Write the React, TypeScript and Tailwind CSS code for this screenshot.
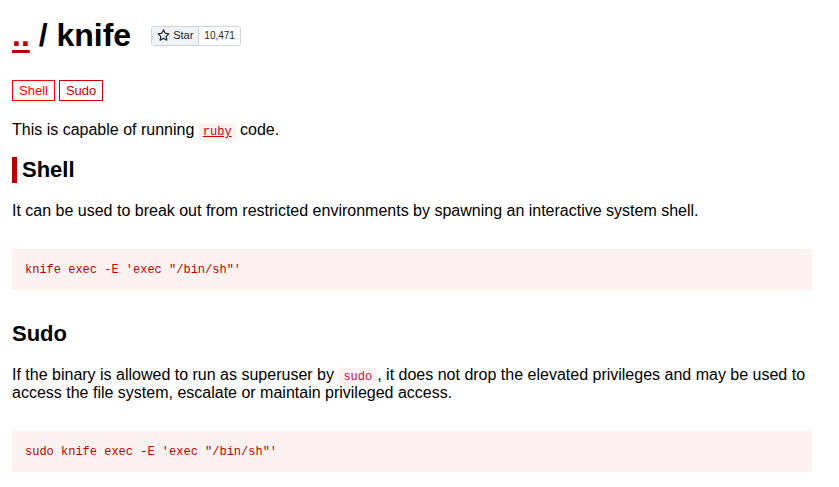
import React from "react";

const StarIcon = () => (
  <svg viewBox="0 0 16 16" width="13" height="13" fill="#24292f" aria-hidden="true">
    <path d="M8 .25a.75.75 0 0 1 .673.418l1.882 3.815 4.21.612a.75.75 0 0 1 .416 1.279l-3.046 2.97.719 4.192a.751.751 0 0 1-1.088.791L8 12.347l-3.766 1.98a.75.75 0 0 1-1.088-.79l.72-4.194L.818 6.374a.75.75 0 0 1 .416-1.28l4.21-.611L7.327.668A.75.75 0 0 1 8 .25Zm0 2.445L6.615 5.5a.75.75 0 0 1-.564.41l-3.097.45 2.24 2.184a.75.75 0 0 1 .216.664l-.528 3.084 2.769-1.456a.75.75 0 0 1 .698 0l2.77 1.456-.53-3.084a.75.75 0 0 1 .216-.664l2.24-2.183-3.096-.45a.75.75 0 0 1-.564-.41L8 2.694Z" />
  </svg>
);

const CodeBlock = ({ children }: { children: string }) => (
  <pre className="bg-[#fdf2f2] pl-[13px] pr-3 pt-[13px] pb-[11px] font-['Liberation_Mono',monospace] text-[12px] leading-[17px] text-[#c00000]">
    {children}
  </pre>
);

const App = () => {
  return (
    <div className="min-h-screen bg-white font-['Liberation_Sans',Arial,sans-serif] text-black">
      <div className="w-[800px] ml-3 pt-[17px] pb-4">
        {/* Title */}
        <div className="flex items-center gap-5">
          <h1 className="text-[32px] leading-[37px] font-bold">
            <a href="#" className="text-[#bb0000] underline decoration-[3px] underline-offset-4">..</a> / knife
          </h1>
          <div className="flex h-5 items-stretch rounded-[3px] border border-[#d1d5da] text-[11px] text-[#24292f]">
            <div className="flex items-center gap-[3px] bg-[#eff3f6] px-[5px] font-medium border-r border-[#d1d5da]">
              <StarIcon />
              <span>Star</span>
            </div>
            <div className="flex items-center bg-white px-[5px] text-[10px]">10,471</div>
          </div>
        </div>

        {/* Tags */}
        <div className="mt-[26px] flex gap-1 text-[13px] leading-[15px]">
          <a href="#" className="border border-[#ff0000] px-[6px] py-[2px] text-[#ff0000]">Shell</a>
          <a href="#" className="border border-[#cc0000] px-[6px] py-[2px] text-[#cc0000]">Sudo</a>
        </div>

        <p className="mt-5 text-[16px] leading-[18px]">
          This is capable of running{" "}
          <a href="#" className="rounded-[3px] bg-[#fdf2f2] px-1 py-[2px] font-['Liberation_Mono',monospace] text-[12px] leading-none text-[#cc0000] underline">ruby</a>{" "}
          code.
        </p>

        {/* Shell */}
        <h2 className="mt-[18px] border-l-[5px] border-[#bb0000] pl-[5px] text-[22px] leading-[26px] font-bold">Shell</h2>
        <p className="mt-[19px] text-[16px] leading-[18px]">
          It can be used to break out from restricted environments by spawning an interactive system shell.
        </p>
        <div className="mt-[29px]">
          <CodeBlock>{`knife exec -E 'exec "/bin/sh"'`}</CodeBlock>
        </div>

        {/* Sudo */}
        <h2 className="mt-[31px] text-[22px] leading-[26px] font-bold">Sudo</h2>
        <p className="mt-[19px] text-[16px] leading-[18px]">
          If the binary is allowed to run as superuser by{" "}
          <code className="rounded-[3px] bg-[#fdf2f2] px-[5px] py-[2px] font-['Liberation_Mono',monospace] text-[12px] leading-none text-[#d0104c]">sudo</code>, it does not drop the elevated privileges and may be used to access the file system, escalate or maintain privileged access.
        </p>
        <div className="mt-[29px]">
          <CodeBlock>{`sudo knife exec -E 'exec "/bin/sh"'`}</CodeBlock>
        </div>
      </div>
    </div>
  );
};

export default App;
